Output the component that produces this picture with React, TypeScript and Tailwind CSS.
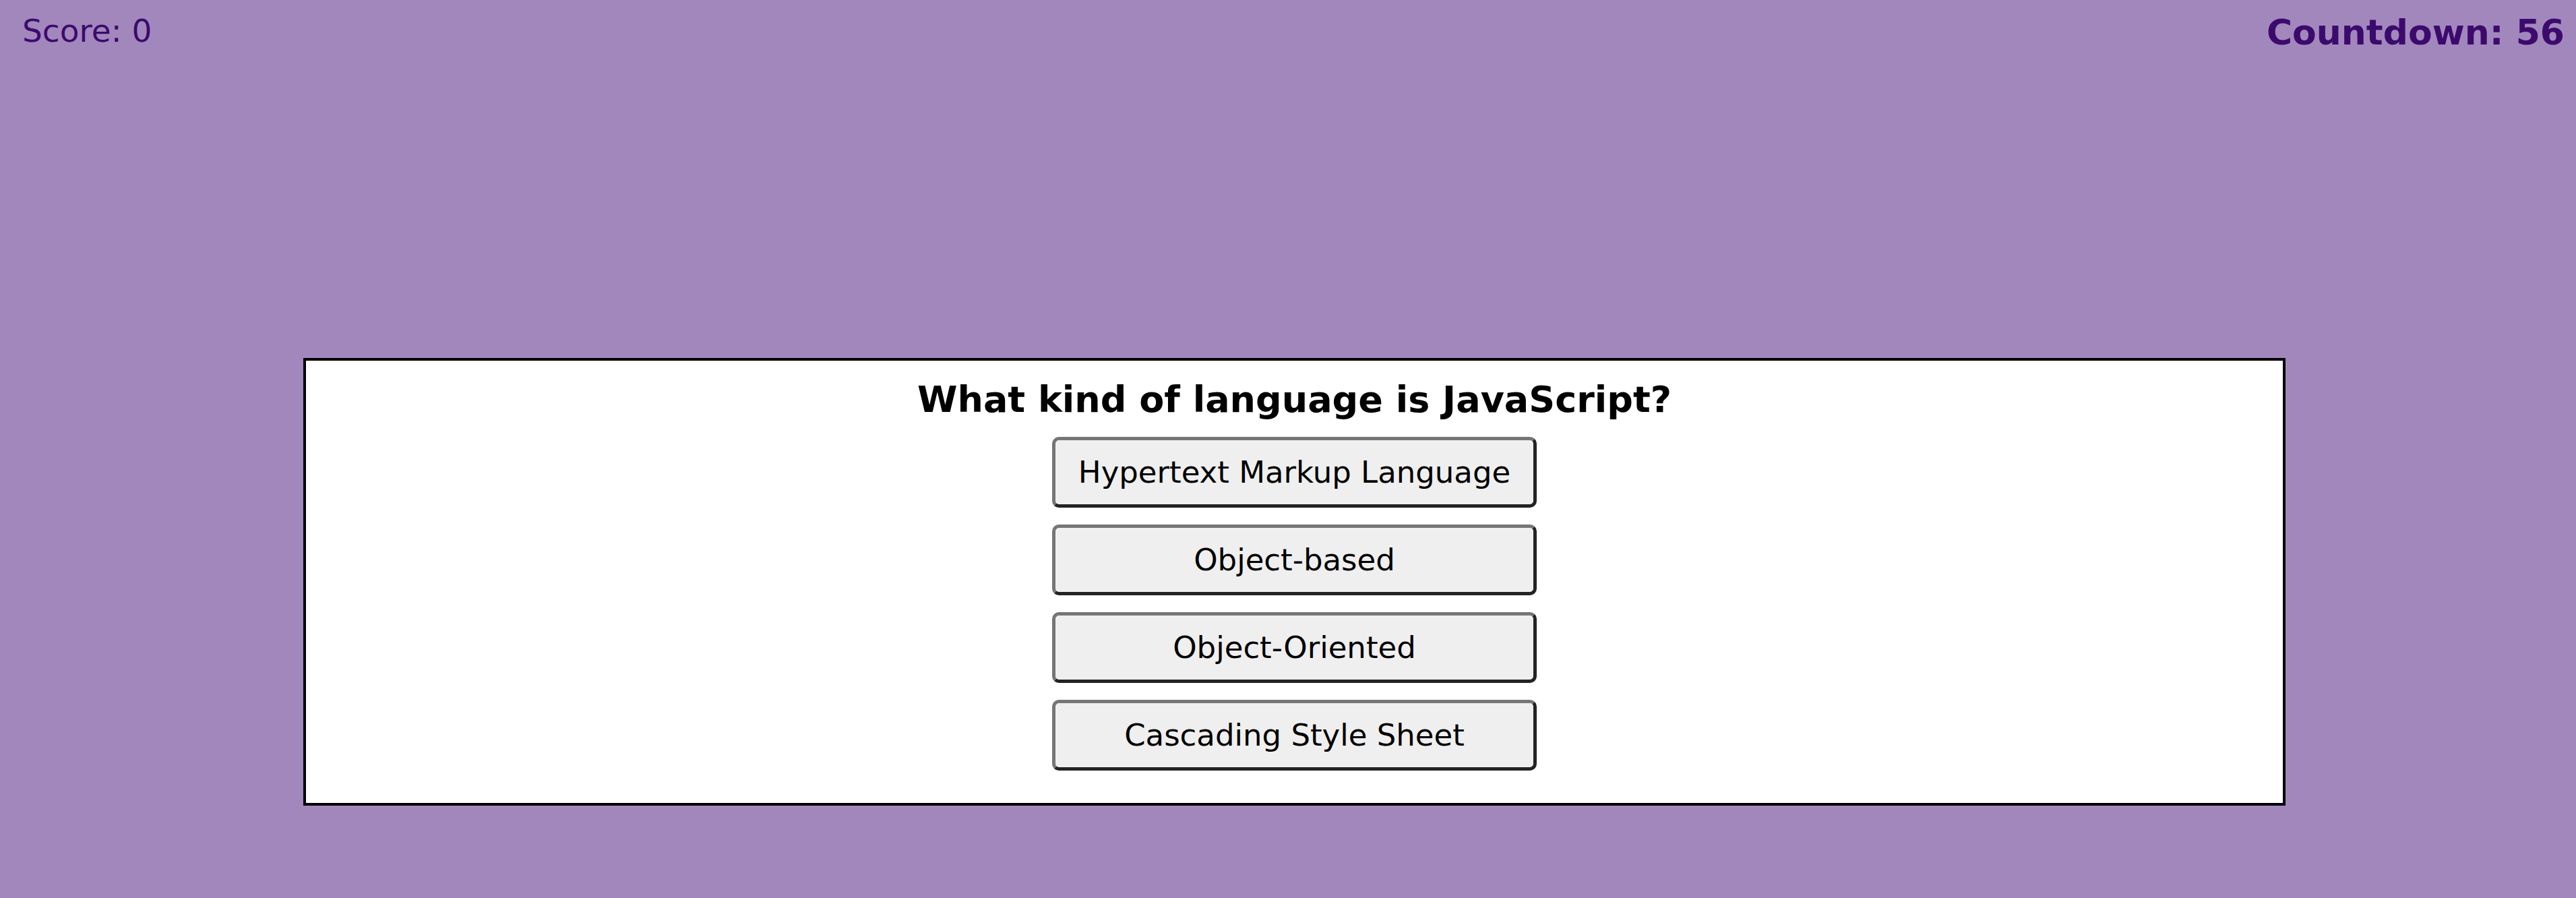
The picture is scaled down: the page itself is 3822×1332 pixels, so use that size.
import React from "react";

const answers = [
  "Hypertext Markup Language",
  "Object-based",
  "Object-Oriented",
  "Cascading Style Sheet",
];

export default function App() {
  return (
    <div
      className="h-[1332px] w-full overflow-hidden bg-[#a287bd] text-[#3c0a6d]"
      style={{ fontFamily: '"DejaVu Sans", Verdana, sans-serif' }}
    >
      {/* Header */}
      <div className="flex items-start justify-between pl-[33px] pr-[17px] pt-[18px]">
        <div className="text-[47px] leading-[55px]">Score: 0</div>
        <div className="text-[52px] font-bold leading-[60px]">Countdown: 56</div>
      </div>

      {/* Quiz card */}
      <div className="ml-[450px] mt-[453px] flex w-[2941px] flex-col items-center border-4 border-black bg-white pt-[26px] pb-[48px]">
        <h2 className="text-[54px] font-bold leading-[63px] text-black">
          What kind of language is JavaScript?
        </h2>
        <div className="mt-[24px] flex flex-col gap-[25px]">
          {answers.map((a) => (
            <button
              key={a}
              className="h-[105px] w-[719px] rounded-[10px] border-[5px] border-t-[#767676] border-l-[#767676] border-r-[#232323] border-b-[#232323] bg-[#efefef] text-[45px] text-black"
            >
              {a}
            </button>
          ))}
        </div>
      </div>
    </div>
  );
}
